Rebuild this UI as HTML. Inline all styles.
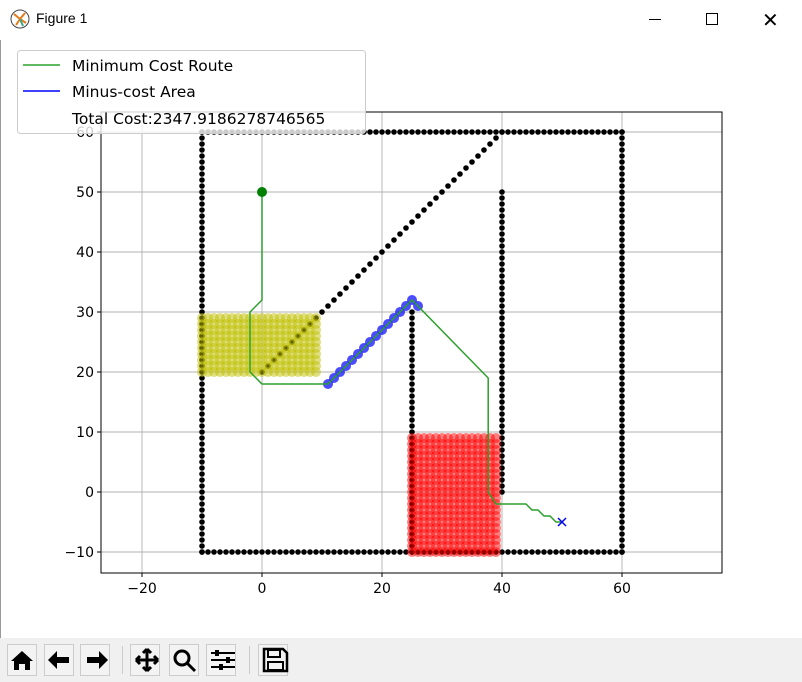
<!DOCTYPE html><html><head><style>
body{margin:0;width:802px;height:682px;overflow:hidden;background:#fff;font-family:"DejaVu Sans","Liberation Sans",sans-serif;position:relative}
.tb{position:absolute;top:0;left:0;width:802px;height:40px;background:#fff}
.tt{position:absolute;left:36px;top:10px;font-size:14px;font-family:"Liberation Sans",sans-serif}
.bar{position:absolute;left:0;top:638px;width:802px;height:44px;background:#f0f0f0}
.btn{position:absolute;top:644px;width:30px;height:32px;background:#f3f3f3;border:1px solid #ccc;box-sizing:border-box}
</style></head><body>
<div class="tb">
<svg style="position:absolute;left:10px;top:9px" width="20" height="20"><circle cx="10" cy="10" r="9" fill="#fff" stroke="#444"/><path d="M10 10L4 5M10 10L15 4M10 10L6 16M10 10L16 14" stroke="#e87a1b" stroke-width="2"/><path d="M10 10L13 17" stroke="#3a8" stroke-width="2"/></svg>
<div class="tt">Figure 1</div>
<div style="position:absolute;left:649px;top:19px;width:12px;height:1px;background:#000"></div>
<div style="position:absolute;left:706px;top:13px;width:10px;height:10px;border:1px solid #000"></div>
<div style="position:absolute;left:762px;top:8px;font-size:20px;font-family:'DejaVu Sans';font-weight:200">✕</div>
</div>
<div style="position:absolute;left:0;top:40px;width:1px;height:598px;background:#999"></div>
<svg id="s" width="802" height="682" style="position:absolute;left:0;top:0"></svg>
<div class="bar"></div>
<div class="btn" style="left:7px"></div><div class="btn" style="left:44px"></div><div class="btn" style="left:80px"></div>
<div class="btn" style="left:130px"></div><div class="btn" style="left:169px"></div><div class="btn" style="left:206px"></div>
<div class="btn" style="left:258px"></div>
<div style="position:absolute;left:122px;top:646px;width:1px;height:28px;background:#ccc"></div>
<div style="position:absolute;left:249px;top:646px;width:1px;height:28px;background:#ccc"></div>
<svg width="802" height="44" style="position:absolute;left:0;top:638px">
<path d="M11 23L22 13L33 23H30V32H25V26H19V32H14V23Z" fill="#000"/>
<path d="M48 22L57 13V19H69V25H57V31Z" fill="#000"/>
<path d="M108 22L99 13V19H87V25H99V31Z" fill="#000"/>
<path d="M147 11V33M136 22H158M147 11L143 15M147 11L151 15M147 33L143 29M147 33L151 29M136 22L140 18M136 22L140 26M158 22L154 18M158 22L154 26" stroke="#000" stroke-width="3" fill="none"/>
<circle cx="182" cy="20" r="7" stroke="#000" stroke-width="3" fill="none"/><path d="M187 25L195 33" stroke="#000" stroke-width="3"/>
<path d="M211 15H235M211 22H235M211 29H235" stroke="#000" stroke-width="2"/><rect x="215" y="12" width="4" height="6" fill="#000"/><rect x="226" y="19" width="4" height="6" fill="#000"/><rect x="219" y="26" width="4" height="6" fill="#000"/>
<path d="M264 11H283L287 15V33H264Z" fill="none" stroke="#000" stroke-width="2.5"/><rect x="268" y="12" width="12" height="7" fill="none" stroke="#000" stroke-width="2"/><rect x="268" y="24" width="15" height="8" fill="none" stroke="#000" stroke-width="2"/>
</svg>
<script>
const s=document.getElementById('s');let h='';
const X=x=>262+6*x,Y=y=>492-6*y;
h+='<rect x="101" y="112" width="621" height="461" fill="#fff"/>';
for(const v of [-20,0,20,40,60]){h+=`<line x1="${X(v)}" x2="${X(v)}" y1="112" y2="573" stroke="#b0b0b0" stroke-width="0.9"/>`;h+=`<line x1="${X(v)}" x2="${X(v)}" y1="573" y2="577" stroke="#000"/><text x="${X(v)}" y="593" font-size="14" text-anchor="middle" font-family="DejaVu Sans">${v<0?'−'+(-v):v}</text>`}
for(const v of [-10,0,10,20,30,40,50,60]){h+=`<line y1="${Y(v)}" y2="${Y(v)}" x1="101" x2="722" stroke="#b0b0b0" stroke-width="0.9"/>`;h+=`<line y1="${Y(v)}" y2="${Y(v)}" x1="97" x2="101" stroke="#000"/><text x="94" y="${Y(v)+5}" font-size="14" text-anchor="end" font-family="DejaVu Sans">${v<0?'−'+(-v):v}</text>`}
const d=(x,y)=>h+=`<circle cx="${X(x)}" cy="${Y(y)}" r="2.8" fill="#000"/>`;
for(let i=-10;i<=60;i++){d(-10,i);d(60,i);d(i,60);d(i,-10)}
for(let i=0;i<=40;i++)d(i,20+i);
for(let i=0;i<=50;i++)d(40,i);
for(let i=-10;i<=30;i++)d(25,i);
for(let x=-10;x<=9;x++)for(let y=20;y<=29;y++)h+=`<circle cx="${X(x)}" cy="${Y(y)}" r="5" fill="#bfbf00" fill-opacity="0.5"/>`;
for(let x=25;x<=39;x++)for(let y=-10;y<=9;y++)h+=`<circle cx="${X(x)}" cy="${Y(y)}" r="5" fill="#ff0000" fill-opacity="0.5"/>`;
for(let i=0;i<=14;i++)h+=`<circle cx="${X(11+i)}" cy="${Y(18+i)}" r="5" fill="#0000ff" fill-opacity="0.7"/>`;
h+=`<circle cx="${X(26)}" cy="${Y(31)}" r="5" fill="#0000ff" fill-opacity="0.7"/>`;
const p=[[0,50],[0,32],[-2,30],[-2,20],[0,18],[11,18],[25,32],[37.7,19],[37.7,0],[39,-2],[44,-2],[45,-3],[46,-3],[47,-4],[48,-4],[49,-5],[50,-5]];
h+=`<polyline points="${p.map(q=>X(q[0])+','+Y(q[1])).join(' ')}" fill="none" stroke="#2ca02c" stroke-width="1.5"/>`;
h+=`<circle cx="${X(0)}" cy="${Y(50)}" r="5" fill="#008000"/>`;
h+=`<path d="M${X(50)-4} ${Y(-5)-4}l8 8m0 -8l-8 8" stroke="#0000ff" stroke-width="1.5"/>`;
h+='<rect x="101" y="112" width="621" height="461" fill="none" stroke="#000" stroke-width="1"/>';
h+='<rect x="17.5" y="50.5" width="348" height="83" rx="3" fill="#fff" fill-opacity="0.8" stroke="#ccc"/>';
h+='<line x1="23" x2="60" y1="65" y2="65" stroke="#2ca02c" stroke-width="1.5"/><line x1="23" x2="60" y1="91" y2="91" stroke="#0000ff" stroke-width="1.5"/>';
h+='<text x="72" y="71" font-size="15.5" font-family="DejaVu Sans">Minimum Cost Route</text><text x="72" y="97" font-size="15.5" font-family="DejaVu Sans">Minus-cost Area</text><text x="72" y="124" font-size="15.5" font-family="DejaVu Sans">Total Cost:2347.9186278746565</text>';
s.innerHTML=h;
</script>
</body></html>
